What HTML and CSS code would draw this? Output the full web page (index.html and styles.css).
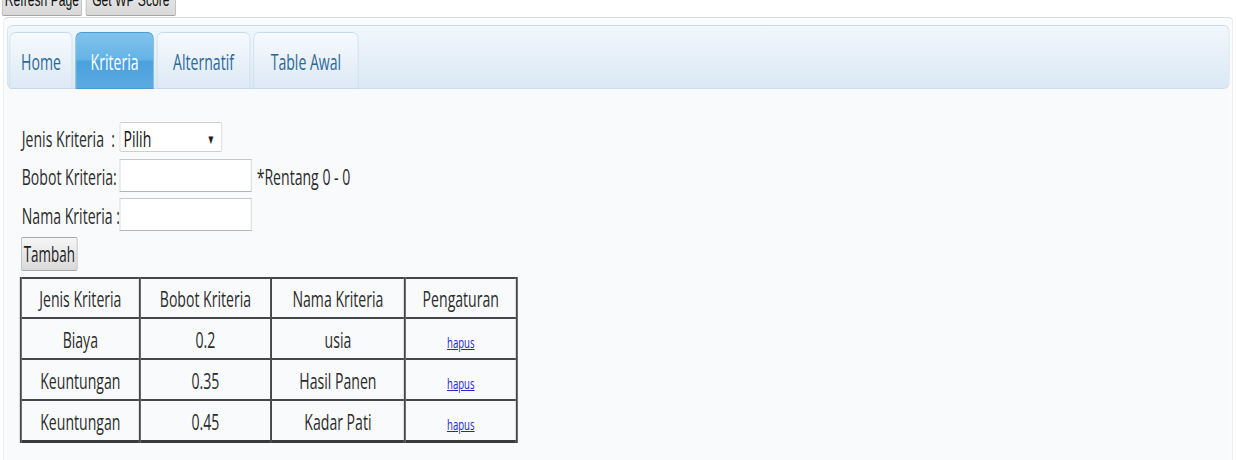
FILE: index.html
```html
<!DOCTYPE html>
<html lang="id">
<head>
    <meta charset="UTF-8">
    <meta name="viewport" content="width=device-width, initial-scale=1.0">
    <title>SPK Weighted Product - Kriteria</title>
    <link rel="stylesheet" href="styles.css">
</head>
<body>
    <div class="page">
        <div class="toolbar">
            <button type="button" class="btn-refresh">Refresh Page</button>
            <button type="button" class="btn-score">Get WP Score</button>
        </div>

        <div class="tabs">
            <ul class="tab-nav">
                <li><a href="#home">Home</a></li>
                <li class="active"><a href="#kriteria">Kriteria</a></li>
                <li><a href="#alternatif">Alternatif</a></li>
                <li><a href="#table-awal">Table Awal</a></li>
            </ul>

            <div class="panel" id="kriteria">
                <form class="kriteria-form">
                    <div class="field">
                        <label for="jenis">Jenis Kriteria &nbsp;:</label>
                        <span class="select-wrap">
                            <select id="jenis">
                                <option>Pilih</option>
                                <option>Biaya</option>
                                <option>Keuntungan</option>
                            </select>
                        </span>
                    </div>
                    <div class="field">
                        <label for="bobot">Bobot Kriteria:</label>
                        <input type="text" id="bobot">
                        <span class="hint">*Rentang 0 - 0</span>
                    </div>
                    <div class="field">
                        <label for="nama">Nama Kriteria :</label>
                        <input type="text" id="nama">
                    </div>
                    <button type="button" class="btn-add">Tambah</button>
                </form>

                <table class="data">
                    <thead>
                        <tr>
                            <th class="col-jenis">Jenis Kriteria</th>
                            <th class="col-bobot">Bobot Kriteria</th>
                            <th class="col-nama">Nama Kriteria</th>
                            <th class="col-aksi">Pengaturan</th>
                        </tr>
                    </thead>
                    <tbody>
                        <tr>
                            <td>Biaya</td>
                            <td>0.2</td>
                            <td>usia</td>
                            <td><a href="#" class="del">hapus</a></td>
                        </tr>
                        <tr>
                            <td>Keuntungan</td>
                            <td>0.35</td>
                            <td>Hasil Panen</td>
                            <td><a href="#" class="del">hapus</a></td>
                        </tr>
                        <tr>
                            <td>Keuntungan</td>
                            <td>0.45</td>
                            <td>Kadar Pati</td>
                            <td><a href="#" class="del">hapus</a></td>
                        </tr>
                    </tbody>
                </table>
            </div>
        </div>
    </div>
</body>
</html>
```

FILE: styles.css
```css
html, body { margin: 0; padding: 0; overflow: hidden; background: #fff; }

/* the whole sheet is drawn narrow: a wide layout squeezed on the x axis */
.page {
    width: 1931px;
    transform: scaleX(0.64);
    transform-origin: 0 0;
    font-family: "Open Sans", "Noto Sans", sans-serif;
    font-size: 22px;
    font-weight: 500;
    color: #2b2b2b;
}

.toolbar {
    display: flex;
    gap: 6px;
    height: 33px;
    margin: -17px 0 0 3px;
}
.toolbar button {
    height: 33px;
    padding: 0 2px;
    font: 19px "Liberation Sans", Arial, sans-serif;
    color: #111;
    background: linear-gradient(#efefef, #d8d8d8);
    border: 1px solid #a3a3a3;
    border-radius: 3px / 2px;
}
.btn-refresh { width: 125px; }
.btn-score { width: 141px; }

/* tabs widget */
.tabs {
    margin: 1px 4px 0 5px;
    padding: 7px 5px 0;
    border: 1px solid #dcdcdc;
    border-bottom: none;
    border-radius: 8px 8px 0 0 / 5px 5px 0 0;
    background: #fafbfc;
}
.tab-nav {
    list-style: none;
    margin: 0;
    padding: 6px 0 0 3px;
    height: 64px;
    box-sizing: border-box;
    display: flex;
    gap: 5px;
    border: 1px solid #c8dcee;
    border-radius: 9px / 6px;
    background: linear-gradient(#f1f7fc, #dbe8f4);
}
.tab-nav li {
    height: 57px;
    margin-bottom: -1px;
    box-sizing: border-box;
    border: 1px solid #c5dbec;
    border-radius: 9px 9px 0 0 / 6px 6px 0 0;
    background: linear-gradient(#f6fafd, #dde9f5);
}
.tab-nav li:nth-child(1) { width: 98px; }
.tab-nav li:nth-child(2) { width: 122px; }
.tab-nav li:nth-child(3) { width: 146px; }
.tab-nav li:nth-child(4) { width: 164px; }
.tab-nav a {
    display: flex;
    align-items: center;
    justify-content: center;
    height: 100%;
    color: #2a6899;
    text-decoration: none;
}
.tab-nav li.active {
    border-color: #4a9bd4;
    background: linear-gradient(#80c3ed 0%, #65b3e6 48%, #4aa1dd 52%, #5aaae2 100%);
}
.tab-nav li.active a { color: #fff; }

.panel {
    padding: 33px 0 40px 23px;
    background: #f9fafb;
}

/* form */
.kriteria-form {
    display: flex;
    flex-direction: column;
    align-items: flex-start;
    gap: 6px;
}
.field { display: flex; align-items: center; }
.field label { width: 153px; white-space: nowrap; }
.field input {
    width: 206px;
    height: 33px;
    box-sizing: border-box;
    border: 1px solid #c6c6c6;
    border-bottom-color: #b5b5b5;
    background: #fff;
    font: inherit;
}
.select-wrap { position: relative; display: inline-block; }
.select-wrap select {
    appearance: none;
    -webkit-appearance: none;
    width: 160px;
    height: 30px;
    padding: 0 0 0 5px;
    border: 1px solid #cfcfcf;
    border-radius: 3px / 2px;
    background: #fff;
    font: inherit;
    color: #111;
}
.select-wrap::after {
    content: "\25BC";
    position: absolute;
    right: 11px;
    top: 8px;
    font-size: 13px;
    color: #222;
    pointer-events: none;
}
.hint { margin-left: 8px; }

.btn-add {
    height: 34px;
    margin-left: -1px;
    padding: 0 3px;
    font: 500 21px "Open Sans", sans-serif;
    color: #222;
    background: linear-gradient(#f6f6f6, #d9d9d9);
    border: 1px solid #a8a8a8;
    border-radius: 3px / 2px;
}

/* data table */
.data {
    margin: 6px 0 0 -3px;
    border-collapse: collapse;
    border-style: solid;
    border-color: #3a3a3a;
    border-width: 2px 3px 3px;
}
.data th,
.data td {
    padding: 0;
    text-align: center;
    font-weight: 500;
    border-style: solid;
    border-color: #464646;
    border-width: 2px 3px;
}
.data th { height: 38px; }
.data td { height: 39px; }
.col-jenis { width: 183px; }
.col-bobot { width: 202px; }
.col-nama { width: 206px; }
.col-aksi { width: 172px; }

.del {
    font-size: 15px;
    color: #2424d8;
    text-decoration: underline;
}
```
